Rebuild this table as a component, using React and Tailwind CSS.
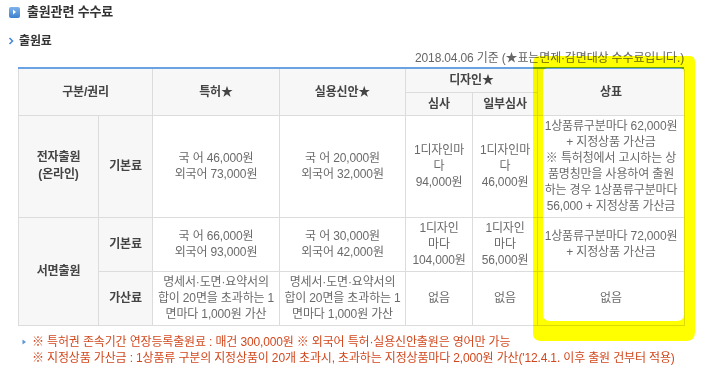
export default function App() {
  const font = { fontFamily: '"Liberation Sans", "Noto Sans CJK KR", sans-serif' };
  const th = "border border-[#dcdcdc] bg-[#f7f7f7] text-[#444] font-bold text-[12px] text-center align-middle p-0";
  const td = "border border-[#dcdcdc] bg-white text-[#6a6a6a] text-[12px] leading-[16px] text-center align-middle p-0";
  return (
    <div className="relative w-[701px] h-[377px] bg-white overflow-hidden tracking-[-0.15px]" style={font}>
      <div className="pl-[9px] pt-[4px] flex items-center h-[16px] box-content">
        <span className="w-[11px] h-[11px] rounded-[2px] bg-gradient-to-b from-[#7fb2ea] to-[#3b7fd0] flex items-center justify-center mr-[7px]">
          <svg width="5" height="6" viewBox="0 0 5 6"><path d="M1 0.5 L4 3 L1 5.5 Z" fill="#fff" /></svg>
        </span>
        <span className="text-[13px] font-bold text-[#333] leading-[16px]">출원관련 수수료</span>
      </div>
      <div className="pl-[8px] mt-[13px] flex items-center h-[16px]">
        <svg width="6" height="8" viewBox="0 0 6 8" className="mr-[5px]"><path d="M1.5 1 L4.5 4 L1.5 7" stroke="#4a8ad6" strokeWidth="1.6" fill="none" /></svg>
        <span className="text-[12px] font-bold text-[#333] leading-[16px]">출원료</span>
      </div>
      <div className="w-[684px] mt-[1px] text-right text-[12px] leading-[16px] text-[#666] h-[16px]">
        2018.04.06 기준 (★표는면제·감면대상 수수료입니다.)
      </div>
      <div className="ml-[18px] w-[666px] mt-[1px] border-t-2 border-[#6aa3e4]">
        <table className="table-fixed border-collapse w-[666px]">
          <colgroup>
            <col className="w-[80px]" />
            <col className="w-[54px]" />
            <col className="w-[127px]" />
            <col className="w-[126px]" />
            <col className="w-[67px]" />
            <col className="w-[65px]" />
            <col className="w-[147px]" />
          </colgroup>
          <tbody>
            <tr className="h-[23px]">
              <th colSpan={2} rowSpan={2} className={th + " border-t-0"}>구분/권리</th>
              <th rowSpan={2} className={th + " border-t-0"}>특허★</th>
              <th rowSpan={2} className={th + " border-t-0"}>실용신안★</th>
              <th colSpan={2} className={th + " border-t-0"}>디자인★</th>
              <th rowSpan={2} className={th + " border-t-0"}>상표</th>
            </tr>
            <tr className="h-[23px]">
              <th className={th}>심사</th>
              <th className={th}>일부심사</th>
            </tr>
            <tr className="h-[102px]">
              <th className={th + " leading-[17px]"}>전자출원<br />(온라인)</th>
              <th className={th}>기본료</th>
              <td className={td}>국 어 46,000원<br />외국어 73,000원</td>
              <td className={td}>국 어 20,000원<br />외국어 32,000원</td>
              <td className={td}>1디자인마<br />다<br />94,000원</td>
              <td className={td}>1디자인마<br />다<br />46,000원</td>
              <td className={td + " whitespace-nowrap"}>
                1상품류구분마다 62,000원<br />+ 지정상품 가산금<br />※ 특허청에서 고시하는 상<br />품명칭만을 사용하여 출원<br />하는 경우 1상품류구분마다<br />56,000 + 지정상품 가산금
              </td>
            </tr>
            <tr className="h-[54px]">
              <th rowSpan={2} className={th}>서면출원</th>
              <th className={th}>기본료</th>
              <td className={td}>국 어 66,000원<br />외국어 93,000원</td>
              <td className={td}>국 어 30,000원<br />외국어 42,000원</td>
              <td className={td}>1디자인<br />마다<br />104,000원</td>
              <td className={td}>1디자인<br />마다<br />56,000원</td>
              <td className={td + " whitespace-nowrap"}>1상품류구분마다 72,000원<br />+ 지정상품 가산금</td>
            </tr>
            <tr className="h-[54px]">
              <th className={th}>가산료</th>
              <td className={td + " whitespace-nowrap"}>명세서·도면·요약서의<br />합이 20면을 초과하는 1<br />면마다 1,000원 가산</td>
              <td className={td + " whitespace-nowrap"}>명세서·도면·요약서의<br />합이 20면을 초과하는 1<br />면마다 1,000원 가산</td>
              <td className={td}>없음</td>
              <td className={td}>없음</td>
              <td className={td}>없음</td>
            </tr>
          </tbody>
        </table>
      </div>
      <div className="mt-[8px] pl-[22px] text-[12px] leading-[16px] text-[#d2481e]">
        <div className="flex items-center whitespace-nowrap">
          <svg width="5" height="6" viewBox="0 0 5 6" className="mr-[5px]"><path d="M0.5 0.5 L4 3 L0.5 5.5 Z" fill="#5b95d6" /></svg>
          <span>※ 특허권 존속기간 연장등록출원료 : 매건 300,000원 ※ 외국어 특허·실용신안출원은 영어만 가능</span>
        </div>
        <div className="pl-[10px] whitespace-nowrap">※ 지정상품 가산금 : 1상품류 구분의 지정상품이 20개 초과시, 초과하는 지정상품마다 2,000원 가산('12.4.1. 이후 출원 건부터 적용)</div>
      </div>
      <svg className="absolute inset-0 pointer-events-none mix-blend-multiply" width="701" height="377" viewBox="0 0 701 377">
        <path
          fillRule="evenodd"
          fill="#ffff00"
          d="M540 56 L690 56 Q695 56 695 62 L695 332 Q695 341 686 341 L541 341 Q533 341 533 333 L533 63 Q533 56 540 56 Z M548 68 L679 68 Q684 68 684 73 L684 314 Q684 321 677 321 L550 321 Q543 321 543 314 L543 73 Q543 68 548 68 Z"
        />
      </svg>
    </div>
  );
}
